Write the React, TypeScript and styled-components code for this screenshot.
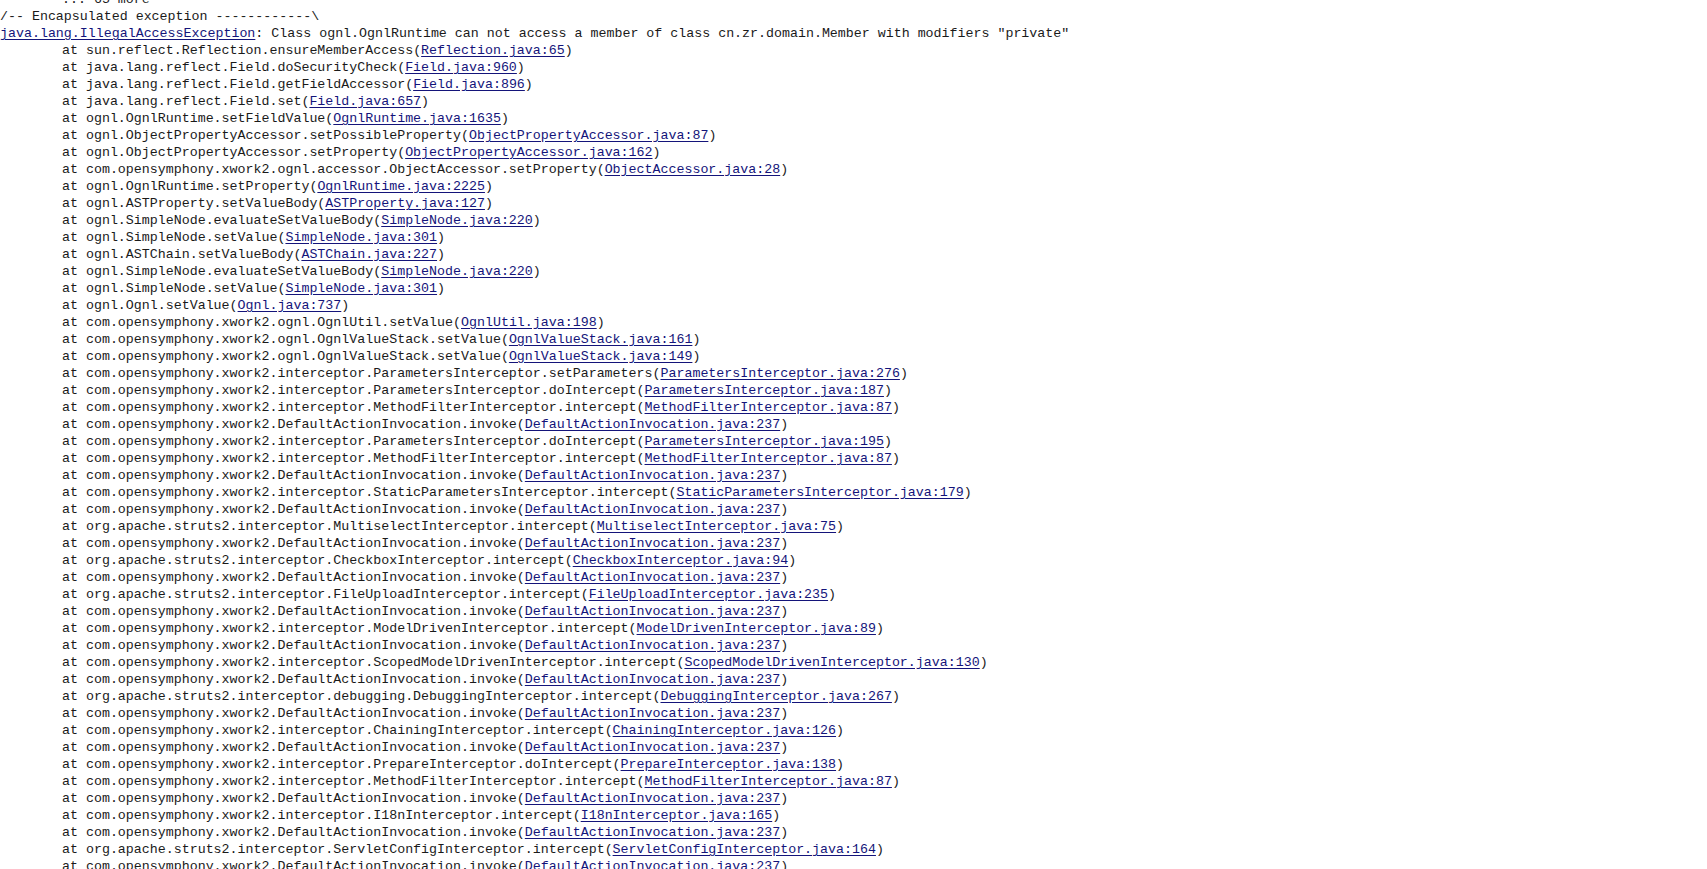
import React from 'react';
import styled, { createGlobalStyle } from 'styled-components';

const GlobalStyle = createGlobalStyle`
  html, body {
    margin: 0;
    padding: 0;
    background: #ffffff;
  }
  body {
    height: 869px;
    overflow: hidden;
  }
`;

const DAI: [string, string] = [
  'com.opensymphony.xwork2.DefaultActionInvocation.invoke',
  'DefaultActionInvocation.java:237',
];

const frames: [string, string][] = [
  ['sun.reflect.Reflection.ensureMemberAccess', 'Reflection.java:65'],
  ['java.lang.reflect.Field.doSecurityCheck', 'Field.java:960'],
  ['java.lang.reflect.Field.getFieldAccessor', 'Field.java:896'],
  ['java.lang.reflect.Field.set', 'Field.java:657'],
  ['ognl.OgnlRuntime.setFieldValue', 'OgnlRuntime.java:1635'],
  ['ognl.ObjectPropertyAccessor.setPossibleProperty', 'ObjectPropertyAccessor.java:87'],
  ['ognl.ObjectPropertyAccessor.setProperty', 'ObjectPropertyAccessor.java:162'],
  ['com.opensymphony.xwork2.ognl.accessor.ObjectAccessor.setProperty', 'ObjectAccessor.java:28'],
  ['ognl.OgnlRuntime.setProperty', 'OgnlRuntime.java:2225'],
  ['ognl.ASTProperty.setValueBody', 'ASTProperty.java:127'],
  ['ognl.SimpleNode.evaluateSetValueBody', 'SimpleNode.java:220'],
  ['ognl.SimpleNode.setValue', 'SimpleNode.java:301'],
  ['ognl.ASTChain.setValueBody', 'ASTChain.java:227'],
  ['ognl.SimpleNode.evaluateSetValueBody', 'SimpleNode.java:220'],
  ['ognl.SimpleNode.setValue', 'SimpleNode.java:301'],
  ['ognl.Ognl.setValue', 'Ognl.java:737'],
  ['com.opensymphony.xwork2.ognl.OgnlUtil.setValue', 'OgnlUtil.java:198'],
  ['com.opensymphony.xwork2.ognl.OgnlValueStack.setValue', 'OgnlValueStack.java:161'],
  ['com.opensymphony.xwork2.ognl.OgnlValueStack.setValue', 'OgnlValueStack.java:149'],
  ['com.opensymphony.xwork2.interceptor.ParametersInterceptor.setParameters', 'ParametersInterceptor.java:276'],
  ['com.opensymphony.xwork2.interceptor.ParametersInterceptor.doIntercept', 'ParametersInterceptor.java:187'],
  ['com.opensymphony.xwork2.interceptor.MethodFilterInterceptor.intercept', 'MethodFilterInterceptor.java:87'],
  DAI,
  ['com.opensymphony.xwork2.interceptor.ParametersInterceptor.doIntercept', 'ParametersInterceptor.java:195'],
  ['com.opensymphony.xwork2.interceptor.MethodFilterInterceptor.intercept', 'MethodFilterInterceptor.java:87'],
  DAI,
  ['com.opensymphony.xwork2.interceptor.StaticParametersInterceptor.intercept', 'StaticParametersInterceptor.java:179'],
  DAI,
  ['org.apache.struts2.interceptor.MultiselectInterceptor.intercept', 'MultiselectInterceptor.java:75'],
  DAI,
  ['org.apache.struts2.interceptor.CheckboxInterceptor.intercept', 'CheckboxInterceptor.java:94'],
  DAI,
  ['org.apache.struts2.interceptor.FileUploadInterceptor.intercept', 'FileUploadInterceptor.java:235'],
  DAI,
  ['com.opensymphony.xwork2.interceptor.ModelDrivenInterceptor.intercept', 'ModelDrivenInterceptor.java:89'],
  DAI,
  ['com.opensymphony.xwork2.interceptor.ScopedModelDrivenInterceptor.intercept', 'ScopedModelDrivenInterceptor.java:130'],
  DAI,
  ['org.apache.struts2.interceptor.debugging.DebuggingInterceptor.intercept', 'DebuggingInterceptor.java:267'],
  DAI,
  ['com.opensymphony.xwork2.interceptor.ChainingInterceptor.intercept', 'ChainingInterceptor.java:126'],
  DAI,
  ['com.opensymphony.xwork2.interceptor.PrepareInterceptor.doIntercept', 'PrepareInterceptor.java:138'],
  ['com.opensymphony.xwork2.interceptor.MethodFilterInterceptor.intercept', 'MethodFilterInterceptor.java:87'],
  DAI,
  ['com.opensymphony.xwork2.interceptor.I18nInterceptor.intercept', 'I18nInterceptor.java:165'],
  DAI,
  ['org.apache.struts2.interceptor.ServletConfigInterceptor.intercept', 'ServletConfigInterceptor.java:164'],
  DAI,
];

// the page is scrolled: the "... more" line sits half above the top edge
const Trace = styled.div`
  margin-top: -9px;
  font-family: 'Liberation Mono', 'Courier New', monospace;
  font-size: 13.3px;
  line-height: 17px;
  color: #1a1a1a;
  white-space: pre;
`;

const Line = styled.div<{ $indent?: boolean }>`
  height: 17px;
  padding-left: ${(p) => (p.$indent ? '62px' : '0')};
`;

const SourceLink = styled.a`
  color: #14147a;
  text-decoration: underline;
  text-underline-offset: 2px;
  cursor: pointer;
`;

export default function App() {
  return (
    <>
      <GlobalStyle />
      <Trace>
        <Line $indent>... 65 more</Line>
        <Line>/-- Encapsulated exception ------------\</Line>
        <Line>
          <SourceLink>java.lang.IllegalAccessException</SourceLink>: Class ognl.OgnlRuntime can not
          access a member of class cn.zr.domain.Member with modifiers "private"
        </Line>
        {frames.map(([method, file], key) => (
          <Line $indent key={key}>
            at {method}(<SourceLink>{file}</SourceLink>)
          </Line>
        ))}
      </Trace>
    </>
  );
}
